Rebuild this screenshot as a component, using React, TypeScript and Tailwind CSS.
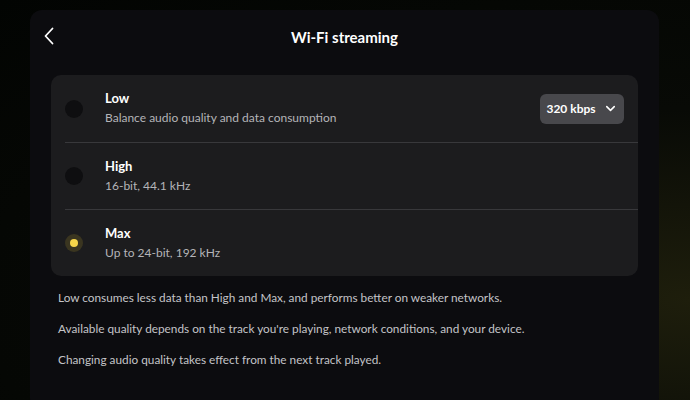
import { ChevronDown } from "lucide-react";

interface QualityOption {
  name: string;
  detail: string;
  selected?: boolean;
}

const options: QualityOption[] = [
  { name: "Low", detail: "Balance audio quality and data consumption" },
  { name: "High", detail: "16-bit, 44.1 kHz" },
  { name: "Max", detail: "Up to 24-bit, 192 kHz", selected: true },
];

const notes = [
  "Low consumes less data than High and Max, and performs better on weaker networks.",
  "Available quality depends on the track you're playing, network conditions, and your device.",
  "Changing audio quality takes effect from the next track played.",
];

const Radio = ({ on }: { on?: boolean }) =>
  on ? (
    <span className="flex h-[18px] w-[18px] items-center justify-center rounded-full bg-[#3a3520]">
      <span className="h-[8px] w-[8px] rounded-full bg-[#f7d64a]" />
    </span>
  ) : (
    <span className="h-[18px] w-[18px] rounded-full bg-[#0e0e10]" />
  );

export default function App() {
  return (
    <div
      className="h-[400px] w-[690px] overflow-hidden bg-[radial-gradient(ellipse_at_100%_75%,#1e1e0c_0%,#080a06_45%,#020402_100%)] pt-[10px] pl-[30px] pr-[31px]"
      style={{ fontFamily: "Lato, 'Open Sans', sans-serif" }}
    >
      <div className="h-[400px] rounded-[12px] bg-[#0c0c0f] px-[21px]">
        <header className="relative flex h-[53px] items-center justify-center pt-[1px]">
          <svg
            className="absolute left-[-8px] top-[17px]"
            width="12"
            height="18"
            viewBox="0 0 12 18"
            fill="none"
            stroke="white"
            strokeWidth="1.8"
            strokeLinecap="round"
            strokeLinejoin="round"
          >
            <path d="M9.5 1.5 2.5 9l7 7.5" />
          </svg>
          <h1 className="text-[15px] font-bold text-white">Wi-Fi streaming</h1>
        </header>

        <section className="mt-[12px] rounded-[10px] bg-[#1c1c1e]">
          {options.map((o, i) => (
            <div key={o.name} className="flex h-[67px] flex-col">
              {i > 0 && <div className="ml-[14px] h-px bg-[#38383b]" />}
              <div className="flex flex-1 items-center pl-[14px] pr-[14px]">
                <Radio on={o.selected} />
                <div className="ml-[22px] flex-1 -mt-[2px]">
                  <div className="text-[13px] font-bold leading-[16px] text-white">
                    {o.name}
                  </div>
                  <div className="mt-[5px] text-[12px] leading-[14px] text-[#b4b4b8]">
                    {o.detail}
                  </div>
                </div>
                {i === 0 && (
                  <button className="flex h-[30px] w-[84px] items-center justify-center gap-[7px] rounded-[6px] bg-[#48484c] text-[12px] font-bold text-white">
                    320 kbps
                    <ChevronDown size={15} strokeWidth={2.5} />
                  </button>
                )}
              </div>
            </div>
          ))}
        </section>

        <div className="mt-[15px] flex flex-col gap-[17px] pl-[7px]">
          {notes.map((n) => (
            <p key={n} className="text-[11.8px] leading-[14px] text-[#c4c4c8]">
              {n}
            </p>
          ))}
        </div>
      </div>
    </div>
  );
}
